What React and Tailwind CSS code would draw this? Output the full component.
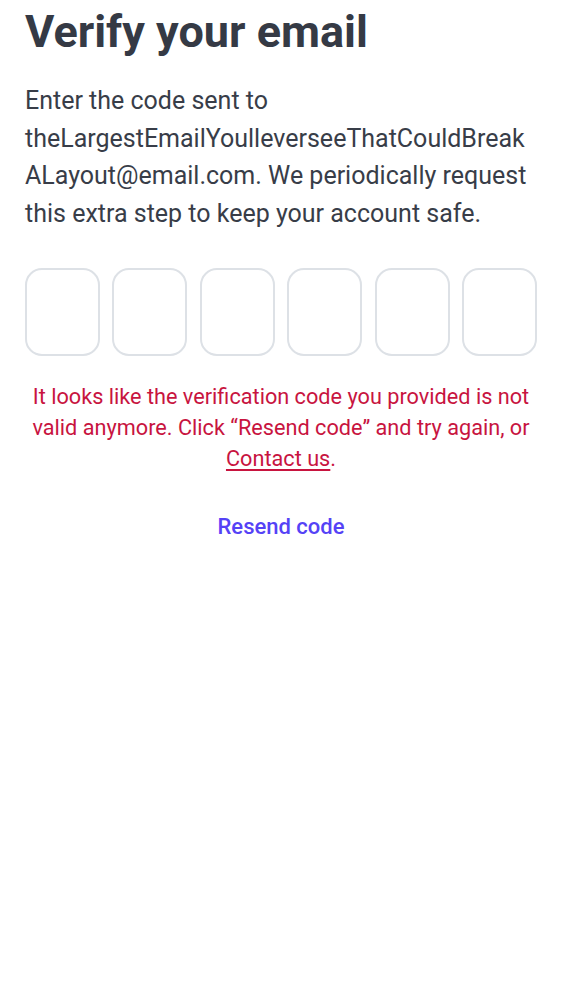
import React from "react";

export default function App() {
  return (
    <div className="min-h-[1000px] bg-white px-[25px] text-[#353a45]" style={{ fontFamily: "Roboto, 'Noto Sans', sans-serif" }}>
      <h1 className="pt-[2px] text-[45px] font-bold leading-[60px]">Verify your email</h1>
      <p className="mt-[20px] text-[25px] leading-[37.5px] text-[#383d48] break-words">
        Enter the code sent to theLargestEmailYoulleverseeThatCouldBreakALayout@email.com. We periodically request this extra step to keep your account safe.
      </p>
      <div className="mt-[36px] flex justify-between">
        {[0, 1, 2, 3, 4, 5].map((i) => (
          <div key={i} className="h-[88px] w-[75px] rounded-[17px] border-2 border-[#dde1e6]" />
        ))}
      </div>
      <p className="mt-[25px] text-center text-[21.7px] leading-[31px] text-[#c8143f]">
        It looks like the verification code you provided is not valid anymore. Click “Resend code” and try again, or{" "}
        <a className="underline decoration-[#c8143f] decoration-[1.5px] underline-offset-[3px]">Contact us</a>.
      </p>
      <div className="mt-[39px] text-center">
        <button className="text-[22px] font-medium leading-[28px] text-[#5542f6]">Resend code</button>
      </div>
    </div>
  );
}
